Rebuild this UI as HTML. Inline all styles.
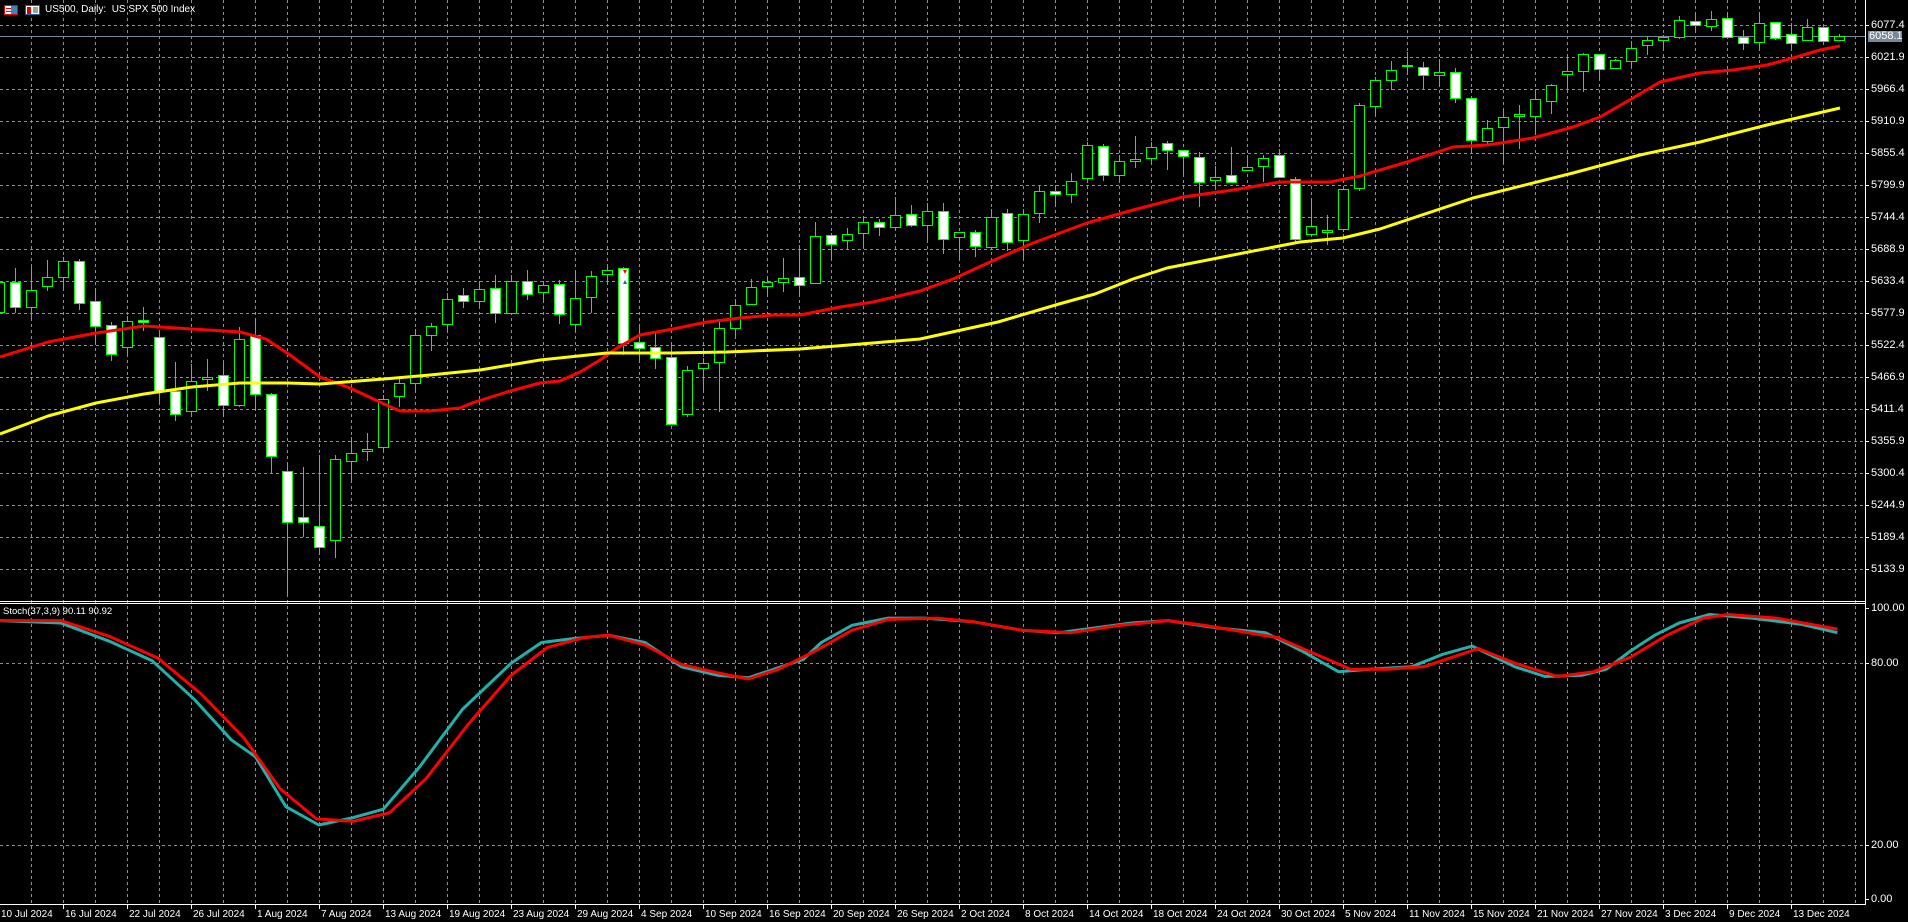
<!DOCTYPE html>
<html><head><meta charset="utf-8"><style>
html,body{margin:0;padding:0;background:#000;width:1908px;height:922px;overflow:hidden;font-family:"Liberation Sans",Tahoma,sans-serif}
#c{position:absolute;left:0;top:0}
.t{position:absolute;color:#fff;font-size:10px;line-height:12px;white-space:nowrap}
.pl{position:absolute;left:1871px;color:#fff;font-size:11px;line-height:12px}
.dl{position:absolute;top:909px;color:#fff;font-size:10px;line-height:12px;white-space:nowrap}
</style></head><body>
<svg id="c" width="1908" height="922" xmlns="http://www.w3.org/2000/svg"></svg>
<div class="t" style="left:45px;top:4px">US500, Daily:&nbsp; US SPX 500 Index</div>
<div class="t" style="left:3px;top:606px;font-size:9.5px">Stoch(37,3,9) 90.11 90.92</div>
<div class="pl" style="top:19px">6077.4</div>
<div style="position:absolute;left:1868px;top:31px;width:34px;height:11px;background:#778899"></div>
<div class="pl" style="top:30px;left:1869px">6058.1</div>
<div class="pl" style="top:51px">6021.9</div>
<div class="pl" style="top:83px">5966.4</div>
<div class="pl" style="top:115px">5910.9</div>
<div class="pl" style="top:147px">5855.4</div>
<div class="pl" style="top:179px">5799.9</div>
<div class="pl" style="top:211px">5744.4</div>
<div class="pl" style="top:243px">5688.9</div>
<div class="pl" style="top:275px">5633.4</div>
<div class="pl" style="top:307px">5577.9</div>
<div class="pl" style="top:339px">5522.4</div>
<div class="pl" style="top:371px">5466.9</div>
<div class="pl" style="top:403px">5411.4</div>
<div class="pl" style="top:435px">5355.9</div>
<div class="pl" style="top:467px">5300.4</div>
<div class="pl" style="top:499px">5244.9</div>
<div class="pl" style="top:531px">5189.4</div>
<div class="pl" style="top:563px">5133.9</div>
<div class="pl" style="top:602px">100.00</div>
<div class="pl" style="top:657px">80.00</div>
<div class="pl" style="top:839px">20.00</div>
<div class="pl" style="top:893px">0.00</div>
<div class="dl" style="left:1px">10 Jul 2024</div>
<div class="dl" style="left:65px">16 Jul 2024</div>
<div class="dl" style="left:129px">22 Jul 2024</div>
<div class="dl" style="left:193px">26 Jul 2024</div>
<div class="dl" style="left:257px">1 Aug 2024</div>
<div class="dl" style="left:321px">7 Aug 2024</div>
<div class="dl" style="left:385px">13 Aug 2024</div>
<div class="dl" style="left:449px">19 Aug 2024</div>
<div class="dl" style="left:513px">23 Aug 2024</div>
<div class="dl" style="left:577px">29 Aug 2024</div>
<div class="dl" style="left:641px">4 Sep 2024</div>
<div class="dl" style="left:705px">10 Sep 2024</div>
<div class="dl" style="left:769px">16 Sep 2024</div>
<div class="dl" style="left:833px">20 Sep 2024</div>
<div class="dl" style="left:897px">26 Sep 2024</div>
<div class="dl" style="left:961px">2 Oct 2024</div>
<div class="dl" style="left:1025px">8 Oct 2024</div>
<div class="dl" style="left:1089px">14 Oct 2024</div>
<div class="dl" style="left:1153px">18 Oct 2024</div>
<div class="dl" style="left:1217px">24 Oct 2024</div>
<div class="dl" style="left:1281px">30 Oct 2024</div>
<div class="dl" style="left:1345px">5 Nov 2024</div>
<div class="dl" style="left:1409px">11 Nov 2024</div>
<div class="dl" style="left:1473px">15 Nov 2024</div>
<div class="dl" style="left:1537px">21 Nov 2024</div>
<div class="dl" style="left:1601px">27 Nov 2024</div>
<div class="dl" style="left:1665px">3 Dec 2024</div>
<div class="dl" style="left:1729px">9 Dec 2024</div>
<div class="dl" style="left:1793px">13 Dec 2024</div>
<script>
var s='';
function L(x1,y1,x2,y2,c,w,d){s+='<line x1="'+x1+'" y1="'+y1+'" x2="'+x2+'" y2="'+y2+'" stroke="'+c+'" stroke-width="'+(w||1)+'"'+(d?' stroke-dasharray="'+d+'"':'')+' shape-rendering="crispEdges"/>';}
var g='#8a8f96';
for(var x=31.5;x<1865;x+=32)L(x,0,x,904,g,1,'3,3');
for(var y=25.5;y<600;y+=32)L(0,y,1865,y,g,1,'3,3');
L(0,663.5,1865,663.5,g,1,'3,3');L(0,845.5,1865,845.5,g,1,'3,3');
L(0,36.5,1865,36.5,'#778899',1);
L(0,601.5,1865,601.5,'#fff');L(0,603.5,1865,603.5,'#fff');L(0,904.5,1866,904.5,'#fff');L(1865.5,0,1865.5,905,'#fff');
for(var y=25.5;y<600;y+=32)L(1865,y,1869,y,'#fff');
[608,663,845,899].forEach(function(y){L(1865,y+.5,1869,y+.5,'#fff')});
for(var i=0;i<29;i++){var x=-0.5+64*i;L(x,905,x,909,'#fff');}
function P(pts,c,w,sc){var d='';pts.forEach(function(p,i){d+=(i?'L':'M')+(p[0]*(sc||1)).toFixed(1)+' '+(p[1]*(sc||1)).toFixed(1)});s+='<path d="'+d+'" fill="none" stroke="'+c+'" stroke-width="'+w+'" stroke-linejoin="round"/>';}
var C=[[282,312,275,315,0],[282,307,268,313,1],[290,307,267,319,0],[277,286,260,291,0],[261,277,257,289,0],[261,303,259,310,1],[301,326,288,345,1],[325,354,322,361,1],[321,347,316,355,0],[320,322,307,331,1],
[337,391,333,403,1],[391,414,362,421,1],[381,411,364,415,0],[377,379,359,391,0],[375,405,363,417,1],[339,405,327,407,0],[335,394,318,411,1],[394,456,393,474,1],[471,522,465,595,1],[517,522,467,537,1],
[526,547,455,553,1],[459,540,455,558,0],[453,461,437,481,0],[449,451,433,461,0],[399,447,395,451,0],[383,396,379,407,0],[335,383,329,391,0],[326,335,323,351,0],[299,324,293,333,0],[295,301,288,308,1],
[289,301,281,307,0],[288,313,275,323,1],[281,313,275,313,0],[281,294,270,300,1],[285,292,281,303,0],[284,314,280,324,1],[298,324,270,332,0],[276,297,271,313,0],[270,274,267,285,0],[268,343,267,355,1],
[342,348,327,361,1],[347,358,333,369,1],[357,424,345,424,1],[370,414,366,417,0],[363,368,358,391,0],[328,362,322,412,0],[305,328,299,337,0],[287,304,279,304,0],[282,286,278,297,0],[278,282,258,292,0],
[277,285,245,295,1],[236,283,222,284,0],[235,244,233,259,1],[234,240,228,250,0],[222,233,217,247,0],[222,227,219,236,1],[215,227,197,230,0],[214,225,205,227,1],[211,225,203,241,0],[211,239,203,254,1],
[232,237,232,259,0],[232,246,230,257,1],[217,247,209,249,0],[213,242,209,251,1],[214,240,209,258,0],[191,213,185,223,0],[191,194,185,207,1],[181,194,173,203,0],[145,178,142,181,0],[146,175,144,181,1],
[161,175,155,181,0],[159,161,136,168,0],[147,158,142,165,0],[143,150,141,170,1],[150,156,150,174,1],[157,182,152,207,1],[177,180,166,190,0],[175,182,147,182,1],[167,170,155,170,0],[158,166,155,182,0],
[155,177,149,177,1],[179,239,177,242,1],[226,234,199,234,0],[230,232,215,245,0],[189,229,189,232,0],[105,188,103,191,0],[80,106,77,115,0],[70,80,61,90,0],[65,66,52,75,0],[67,75,62,90,1],
[72,75,59,87,0],[72,98,68,103,1],[98,140,98,153,1],[128,141,120,145,0],[117,127,111,164,0],[114,116,105,149,0],[99,116,89,135,0],[85,101,84,114,0],[71,74,54,90,0],[54,71,53,92,0],
[54,69,54,79,1],[60,68,59,68,0],[48,61,41,67,0],[40,45,37,55,0],[37,40,35,49,0],[20,37,16,39,0],[21,25,13,31,1],[19,26,11,31,0],[18,37,13,37,1],[37,43,30,50,1],
[23,42,12,48,0],[22,38,22,40,1],[34,43,23,49,1],[27,40,19,41,0],[27,41,27,43,1],[36,40,34,40,0]];
C.forEach(function(c,i){var x=16*i-1+.5;var G='#00ff00';
if(c[2]<c[0])L(x,c[2],x,c[0],G);if(c[3]>c[1])L(x,c[1],x,c[3],G);
var h=Math.max(c[1]-c[0],1);
s+='<rect x="'+(x-5)+'" y="'+(c[0]+.5)+'" width="10" height="'+h+'" fill="'+(c[4]?'#fff':'#000')+'" stroke="'+G+'" stroke-width="1" shape-rendering="crispEdges"/>';});
s+='<path d="M623 270 l4 0 l-2 4z" fill="#f00"/><path d="M623 284 l4 0 l-2 -4z" fill="#1565c0"/>';
P([[0,357],[48,342],[96,333],[144,326],[192,329],[240,332],[266,339],[290,355],[320,377],[350,388],[384,404],[400,411],[430,411],[460,408],[472,403],[507,392],[540,383],[560,381],[580,372],[600,360],[617,348],[640,335],[673,329],[707,322],[740,318],[773,315],[800,315],[840,307],[873,302],[920,291],[953,279],[990,262],[1033,243],[1087,223],[1133,210],[1183,197],[1233,190],[1280,182],[1330,182],[1360,176],[1373,172],[1407,162],[1453,147],[1487,145],[1533,138],[1573,127],[1600,117],[1633,98],[1660,82],[1700,73],[1733,70],[1767,65],[1793,58],[1820,50],[1840,46]],'#ff0000',3);
P([[0,434],[48,416],[96,403],[144,394],[192,387],[240,383],[288,383],[320,384],[384,379],[430,375],[480,370],[540,360],[607,353],[673,353],[727,352],[800,349],[873,343],[920,339],[998,322],[1059,304],[1095,294],[1133,279],[1167,268],[1233,255],[1300,242],[1343,238],[1380,229],[1473,198],[1573,173],[1640,155],[1700,142],[1767,125],[1840,108]],'#ffff00',3);
P([[0,510],[50,512],[90,527],[125,543],[160,575],[190,608],[210,622],[235,663],[262,678],[290,672],[315,665],[345,630],[380,583],[420,545],[445,528],[470,525],[500,522],[530,528],[560,548],[590,555],[615,557],[660,542],[675,528],[700,514],[730,508],[760,508],[800,511],[840,518],[870,520],[900,516],[930,512],[960,510],[1000,516],[1040,520],[1070,535],[1100,552],[1125,550],[1160,548],[1185,538],[1210,531],[1245,548],[1270,556],[1300,555],[1320,550],[1340,535],[1360,522],[1380,512],[1405,505],[1440,508],[1480,513],[1510,520]],'#20b2aa',3,1.2168);
P([[0,510],[50,510],[90,523],[130,541],[165,570],[200,606],[230,648],[260,673],[290,675],[320,668],[350,640],[385,595],[420,555],[450,532],[480,524],[500,522],[530,530],[560,546],[590,553],[615,558],[640,550],[670,535],[700,518],[730,509],[770,508],[800,511],[840,518],[880,520],[920,514],[960,510],[990,514],[1020,519],[1050,524],[1075,535],[1110,550],[1140,550],[1170,548],[1200,538],[1215,533],[1245,545],[1280,556],[1310,552],[1340,540],[1370,522],[1400,508],[1420,505],[1460,508],[1510,517]],'#ff0000',3,1.2168);
s+='<rect x="4.5" y="5.5" width="13" height="9" fill="#fff" stroke="#e00"/><rect x="11" y="6" width="6" height="8" fill="#4a7fb5"/><line x1="6" y1="8.5" x2="11" y2="8.5" stroke="#e00"/><line x1="6" y1="11.5" x2="11" y2="11.5" stroke="#e00"/>';
s+='<rect x="25.5" y="5.5" width="14" height="9" fill="#fff" stroke="#1a5fa0"/><rect x="27" y="7" width="4" height="7" fill="#d00"/><rect x="33" y="7" width="5" height="6" fill="#8aa"/>';
document.getElementById('c').innerHTML=s;
</script>
</body></html>
